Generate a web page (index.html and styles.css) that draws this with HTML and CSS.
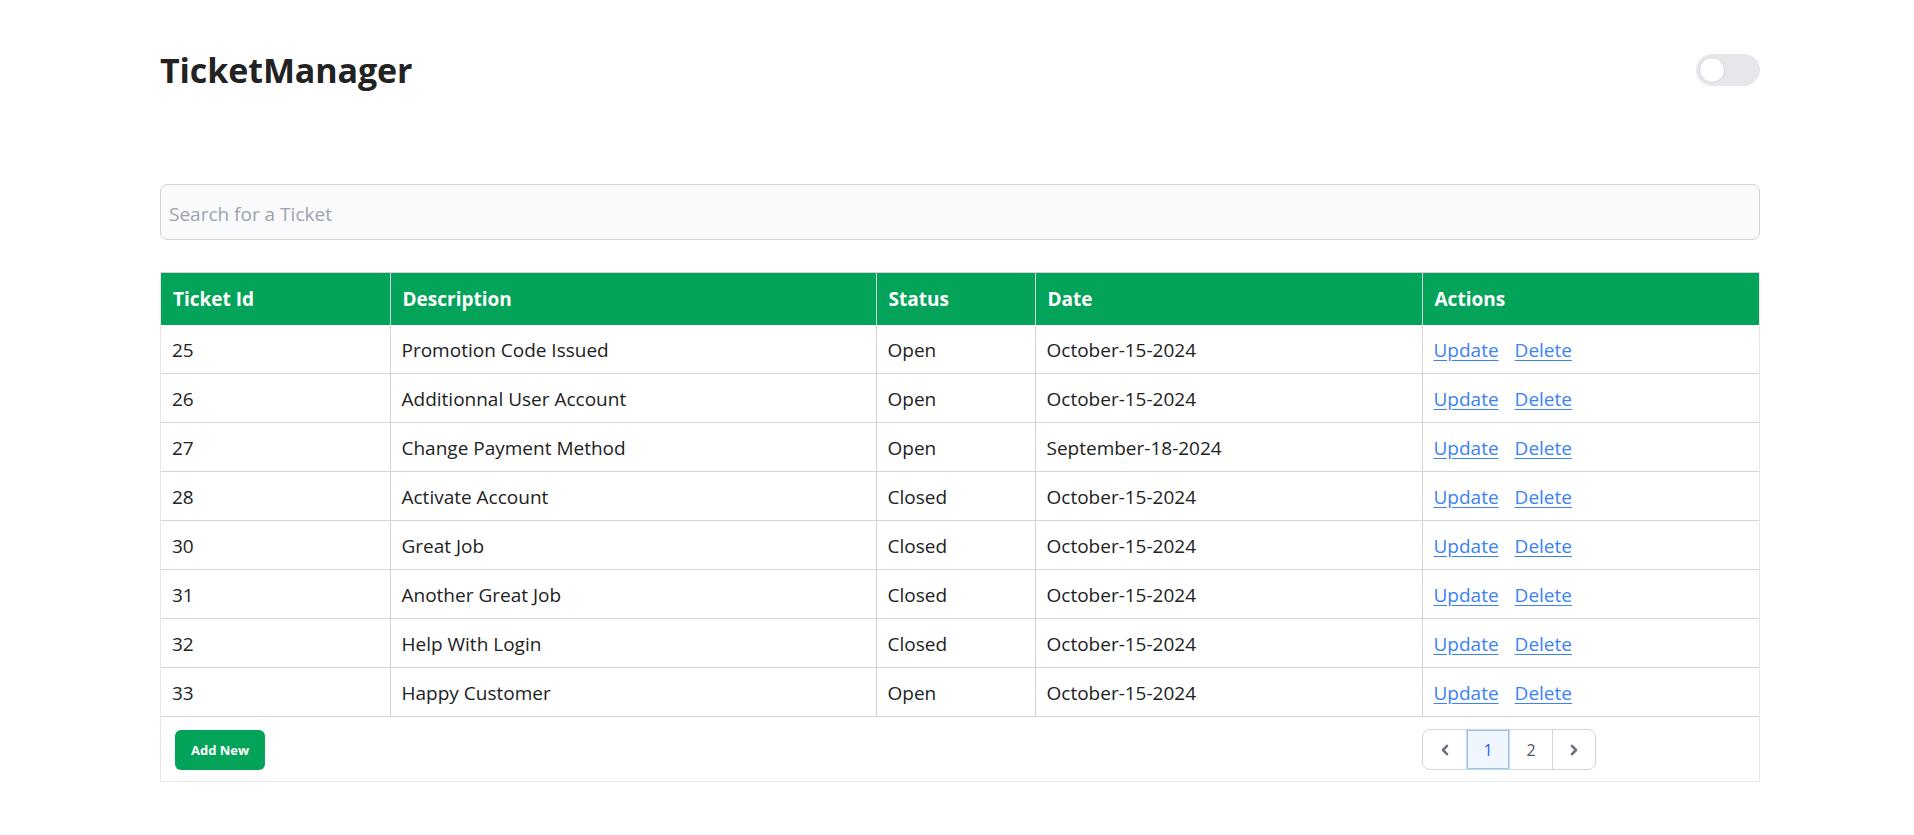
FILE: index.html
```
<!DOCTYPE html>
<html lang="en">
<head>
<meta charset="utf-8">
<title>TicketManager</title>
<link rel="stylesheet" href="styles.css">
</head>
<body>
<div class="page">
  <header class="topbar">
    <h1 class="title">TicketManager</h1>
    <div class="toggle"><span class="knob"></span></div>
  </header>

  <input class="search" type="text" placeholder="Search for a Ticket">

  <div class="table-wrap">
    <table class="tickets">
      <thead>
        <tr>
          <th class="c-id">Ticket Id</th>
          <th class="c-desc">Description</th>
          <th class="c-status">Status</th>
          <th class="c-date">Date</th>
          <th class="c-act">Actions</th>
        </tr>
      </thead>
      <tbody>
        <tr><td>25</td><td>Promotion Code Issued</td><td>Open</td><td>October-15-2024</td><td><a href="#">Update</a><a href="#">Delete</a></td></tr>
        <tr><td>26</td><td>Additionnal User Account</td><td>Open</td><td>October-15-2024</td><td><a href="#">Update</a><a href="#">Delete</a></td></tr>
        <tr><td>27</td><td>Change Payment Method</td><td>Open</td><td>September-18-2024</td><td><a href="#">Update</a><a href="#">Delete</a></td></tr>
        <tr><td>28</td><td>Activate Account</td><td>Closed</td><td>October-15-2024</td><td><a href="#">Update</a><a href="#">Delete</a></td></tr>
        <tr><td>30</td><td>Great Job</td><td>Closed</td><td>October-15-2024</td><td><a href="#">Update</a><a href="#">Delete</a></td></tr>
        <tr><td>31</td><td>Another Great Job</td><td>Closed</td><td>October-15-2024</td><td><a href="#">Update</a><a href="#">Delete</a></td></tr>
        <tr><td>32</td><td>Help With Login</td><td>Closed</td><td>October-15-2024</td><td><a href="#">Update</a><a href="#">Delete</a></td></tr>
        <tr><td>33</td><td>Happy Customer</td><td>Open</td><td>October-15-2024</td><td><a href="#">Update</a><a href="#">Delete</a></td></tr>
      </tbody>
      <tfoot>
        <tr>
          <td colspan="4" class="f-left"><button class="add-btn">Add New</button></td>
          <td class="f-right">
            <nav class="pager">
              <span class="pg pg-arrow"><svg width="14" height="14" viewBox="0 0 14 14"><path d="M9 2.8 L5 7 L9 11.2" fill="none" stroke="#6b7280" stroke-width="2.6" stroke-linecap="round" stroke-linejoin="round"/></svg></span>
              <span class="pg pg-active">1</span>
              <span class="pg">2</span>
              <span class="pg pg-arrow"><svg width="14" height="14" viewBox="0 0 14 14"><path d="M5 2.8 L9 7 L5 11.2" fill="none" stroke="#6b7280" stroke-width="2.6" stroke-linecap="round" stroke-linejoin="round"/></svg></span>
            </nav>
          </td>
        </tr>
      </tfoot>
    </table>
  </div>
</div>
</body>
</html>
```

FILE: styles.css
```
* { box-sizing: border-box; }

body {
  margin: 0;
  background: #ffffff;
  font-family: "Open Sans", "Noto Sans", sans-serif;
  color: #1f2328;
}

.page {
  width: 1600px;
  margin-left: 160px;
}

.topbar {
  display: flex;
  justify-content: space-between;
  align-items: center;
  height: 60px;
  margin-top: 40px;
}

.title {
  margin: 0;
  font-size: 34px;
  font-weight: 700;
  color: #222222;
  letter-spacing: -0.1px;
}

.toggle {
  width: 64px;
  height: 32px;
  border-radius: 16px;
  background: #e5e7eb;
  display: flex;
  align-items: center;
  padding-left: 3px;
}

.knob {
  width: 26px;
  height: 26px;
  border-radius: 50%;
  background: #ffffff;
  border: 1px solid #d1d5db;
}

.search {
  display: block;
  width: 100%;
  height: 56px;
  margin-top: 84px;
  padding: 3px 8px 0;
  border: 1px solid #d1d5db;
  border-radius: 7px;
  background: #f9fafb;
  font-family: inherit;
  font-size: 19px;
  color: #1f2328;
  outline: none;
}

.search::placeholder { color: #9ca3af; }

.table-wrap {
  margin-top: 32px;
  border: 1px solid #e5e7eb;
  border-top: none;
}

.tickets {
  width: 100%;
  border-collapse: collapse;
  font-size: 19px;
}

.tickets th {
  background: #03a35a;
  color: #ffffff;
  font-weight: 700;
  text-align: left;
  padding: 14px 12px 13px;
  line-height: 25px;
  border-left: 1px solid #d1d5db;
  border-top: 1px solid #d1d5db;
}

.tickets th:first-child { border-left: none; }

.tickets td {
  padding: 13px 11px 11px;
  line-height: 24px;
  font-weight: 500;
  border-left: 1px solid #d1d5db;
  border-bottom: 1px solid #d1d5db;
  color: #222222;
}

.tickets td:first-child { border-left: none; }

.c-id { width: 229px; }
.c-desc { width: 486px; }
.c-status { width: 159px; }
.c-date { width: 387px; }

.tickets tbody a {
  color: #3b82f6;
  text-decoration: underline;
  text-underline-offset: 3px;
  margin-right: 16px;
}

.tickets tfoot td {
  border: none;
  padding: 12px 14px 11px;
}

.tickets tfoot td.f-right { padding-left: 0; }

.add-btn {
  display: block;
  height: 40px;
  padding: 0 16px;
  border: none;
  border-radius: 6px;
  background: #03a35a;
  color: #ffffff;
  font-family: inherit;
  font-size: 13px;
  font-weight: 700;
}

.pager {
  display: inline-flex;
  height: 41px;
  border: 1px solid #d1d5db;
  border-radius: 8px;
  overflow: hidden;
}

.pg {
  display: flex;
  align-items: center;
  justify-content: center;
  width: 43px;
  font-size: 16px;
  color: #4b5563;
  border-left: 1px solid #d1d5db;
}

.pg:first-child { border-left: none; }

.pg-active {
  background: #eff6ff;
  color: #2563eb;
  box-shadow: inset 0 0 0 1px #93c5fd;
}
```
